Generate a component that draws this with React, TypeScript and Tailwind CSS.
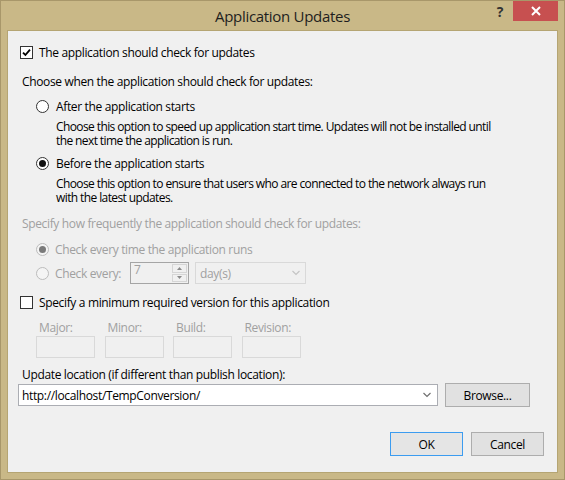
import React from "react";

const font = { fontFamily: '"Open Sans", "Noto Sans", sans-serif' };

function Check({ checked }: { checked?: boolean }) {
  return (
    <div className="w-[13px] h-[13px] border border-[#333333] bg-white flex items-center justify-center shrink-0">
      {checked && (
        <svg width="9" height="9" viewBox="0 0 9 9">
          <path d="M1 4.6 L3.4 7 L8 1.6" fill="none" stroke="#000" strokeWidth="1.8" />
        </svg>
      )}
    </div>
  );
}

function Radio({ checked, disabled }: { checked?: boolean; disabled?: boolean }) {
  return (
    <div
      className={
        "w-[13px] h-[13px] rounded-full border flex items-center justify-center shrink-0 " +
        (disabled ? "border-[#bcbcbc] bg-[#f4f4f4]" : "border-[#333333] bg-white")
      }
    >
      {checked && (
        <div className={"w-[7px] h-[7px] rounded-full " + (disabled ? "bg-[#7a7a7a]" : "bg-[#111111]")} />
      )}
    </div>
  );
}

function Chevron({ color }: { color: string }) {
  return (
    <svg width="8" height="6" viewBox="0 0 8 6">
      <path d="M0.5 1 L4 4.5 L7.5 1" fill="none" stroke={color} strokeWidth="1.2" />
    </svg>
  );
}

export default function App() {
  return (
    <div
      className="w-[565px] h-[480px] bg-[#c9b887] border border-[#a8976a] flex flex-col text-[12px] text-black tracking-[-0.35px]"
      style={font}
    >
      {/* Title bar */}
      <div className="h-[29px] flex relative">
        <div className="flex-1 flex items-center justify-center text-[15px] text-[#1e1e1e] pt-[2px] tracking-[-0.3px]">
          Application Updates
        </div>
        <div className="absolute right-[6px] top-0 flex items-start">
          <div className="w-[24px] h-[20px] flex items-center justify-center text-[14px] font-bold text-[#333] mr-[1px]">
            ?
          </div>
          <div className="w-[45px] h-[20px] bg-[#c75050] flex items-center justify-center">
            <svg width="10" height="10" viewBox="0 0 10 10">
              <path d="M1 1 L9 9 M9 1 L1 9" stroke="#fff" strokeWidth="2" />
            </svg>
          </div>
        </div>
      </div>

      {/* Content */}
      <div className="mx-[6px] mb-[6px] flex-1 bg-[#f0f0f0] border border-[#b5a573] flex flex-col leading-[15px]">
        <div className="mt-[12px] h-[18px] flex items-center pl-[12px] gap-[6px]">
          <Check checked />
          <span>The application should check for updates</span>
        </div>

        <div className="mt-[11px] h-[18px] flex items-center pl-[14px]">
          Choose when the application should check for updates:
        </div>

        <div className="mt-[7px] h-[18px] flex items-center pl-[28px] gap-[7px]">
          <Radio />
          <span>After the application starts</span>
        </div>
        <div className="mt-[5px] pl-[48px] pr-[20px] leading-[14px] tracking-[-0.6px]">
          <div>Choose this option to speed up application start time. Updates will not be installed until</div>
          <div>the next time the application is run.</div>
        </div>

        <div className="mt-[6px] h-[18px] flex items-center pl-[28px] gap-[7px]">
          <Radio checked />
          <span>Before the application starts</span>
        </div>
        <div className="mt-[5px] pl-[48px] pr-[20px] leading-[14px] tracking-[-0.6px]">
          <div>Choose this option to ensure that users who are connected to the network always run</div>
          <div>with the latest updates.</div>
        </div>

        <div className="mt-[9px] h-[18px] flex items-center pl-[14px] text-[#a0a0a0]">
          Specify how frequently the application should check for updates:
        </div>

        <div className="mt-[8px] h-[18px] flex items-center pl-[28px] gap-[6px] text-[#a0a0a0]">
          <Radio checked disabled />
          <span>Check every time the application runs</span>
        </div>

        <div className="mt-[4px] h-[22px] flex items-center pl-[28px] text-[#a0a0a0]">
          <Radio disabled />
          <span className="ml-[6px] w-[75px]">Check every:</span>
          <div className="w-[59px] h-[22px] border border-[#a5a5a5] bg-[#f0f0f0] flex items-stretch">
            <div className="flex-1 pl-[3px] leading-[14px]">7</div>
            <div className="w-[15px] flex flex-col my-[1px] mr-[1px] gap-[1px]">
              <div className="flex-1 border border-[#d5d5d5] flex items-center justify-center">
                <svg width="5" height="3" viewBox="0 0 5 3"><path d="M0 3 L2.5 0 L5 3 Z" fill="#8a8a8a" /></svg>
              </div>
              <div className="flex-1 border border-[#d5d5d5] flex items-center justify-center">
                <svg width="5" height="3" viewBox="0 0 5 3"><path d="M0 0 L2.5 3 L5 0 Z" fill="#8a8a8a" /></svg>
              </div>
            </div>
          </div>
          <div className="ml-[6px] w-[111px] h-[22px] border border-[#d9d9d9] bg-[#f0f0f0] flex items-center pl-[4px] pr-[5px] justify-between">
            <span>day(s)</span>
            <Chevron color="#c4c4c4" />
          </div>
        </div>

        <div className="mt-[9px] h-[18px] flex items-center pl-[12px] gap-[6px]">
          <Check />
          <span>Specify a minimum required version for this application</span>
        </div>

        <div className="mt-[8px] flex pl-[28px] gap-[9.5px] text-[#a0a0a0]">
          {["Major:", "Minor:", "Build:", "Revision:"].map((l) => (
            <div key={l} className="w-[59px] flex flex-col">
              <div className="h-[16px] flex items-center pl-[3px]">{l}</div>
              <div className="mt-[1px] h-[22px] border border-[#d9d9d9] bg-[#f0f0f0]" />
            </div>
          ))}
        </div>

        <div className="mt-[7px] h-[18px] flex items-center pl-[14px]">
          Update location (if different than publish location):
        </div>

        <div className="h-[24px] flex items-center pl-[10px] gap-[7px]">
          <div className="w-[420px] h-[22px] border border-[#abadb3] bg-white flex items-center pl-[3px] pr-[6px] justify-between">
            <span>http://localhost/TempConversion/</span>
            <Chevron color="#707070" />
          </div>
          <div className="w-[85px] h-[24px] border border-[#adadad] bg-[#e1e1e1] flex items-center justify-center">
            Browse...
          </div>
        </div>

        <div className="mt-[25px] flex justify-end pr-[13px] gap-[8px]">
          <div className="w-[73px] h-[24px] border border-[#3c9cf0] bg-[#e5e5e5] flex items-center justify-center">
            OK
          </div>
          <div className="w-[73px] h-[24px] border border-[#adadad] bg-[#e1e1e1] flex items-center justify-center">
            Cancel
          </div>
        </div>
      </div>
    </div>
  );
}
